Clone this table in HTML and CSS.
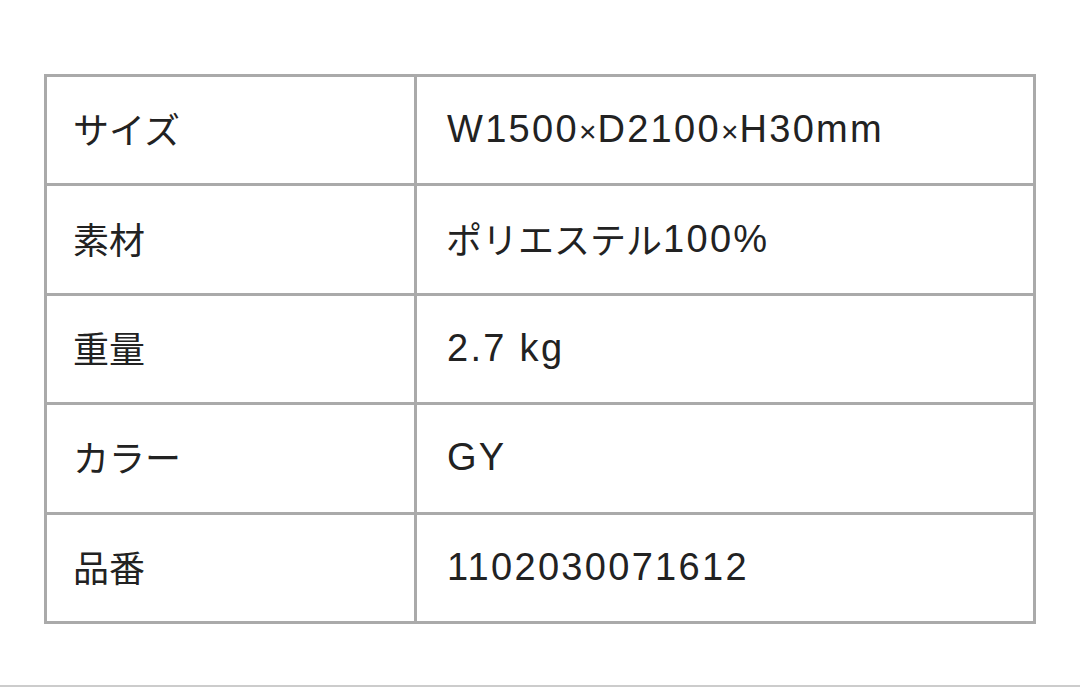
FILE: index.html
```html
<!DOCTYPE html>
<html lang="ja">
<head>
<meta charset="utf-8">
<link rel="stylesheet" href="styles.css">
</head>
<body>
<div class="page">
  <div class="spec">
    <div class="cell label">サイズ</div><div class="cell value"><span class="lat">W1500<span class="times">×</span>D2100<span class="times">×</span>H30mm</span></div>
    <div class="cell label">素材</div><div class="cell value">ポリエステル<span class="lat">100%</span></div>
    <div class="cell label">重量</div><div class="cell value"><span class="lat">2.7 kg</span></div>
    <div class="cell label">カラー</div><div class="cell value"><span class="lat">GY</span></div>
    <div class="cell label">品番</div><div class="cell value"><span class="lat">1102030071612</span></div>
  </div>
</div>
<div class="rule"></div>
</body>
</html>
```
FILE: styles.css
```css
html, body {
  margin: 0;
  padding: 0;
  background: #fff;
}
body {
  height: 687px;
  display: flex;
  flex-direction: column;
  font-family: "Noto Sans CJK JP", "Noto Sans", sans-serif;
  color: #222;
}
.page {
  flex: 1;
  padding: 74px 44px 0;
}
.spec {
  display: grid;
  grid-template-columns: 367px 616px;
  grid-template-rows: repeat(5, 106.4px);
  gap: 3px;
  padding: 3px;
  background: #aaaaaa;
  width: max-content;
}
.cell {
  background: #fff;
  display: flex;
  align-items: center;
  font-size: 36px;
  line-height: 1;
  padding-bottom: 4px;
  white-space: nowrap;
}
.label {
  padding-left: 26px;
}
.value {
  padding-left: 29px;
}
.lat {
  font-family: "Liberation Sans", Arial, sans-serif;
  font-size: 38px;
  letter-spacing: 2.3px;
  margin-left: 1px;
  position: relative;
  top: 1px;
}
.times {
  font-size: 30px;
  letter-spacing: 1px;
}
.rule {
  height: 2px;
  background: #cccccc;
}
```
